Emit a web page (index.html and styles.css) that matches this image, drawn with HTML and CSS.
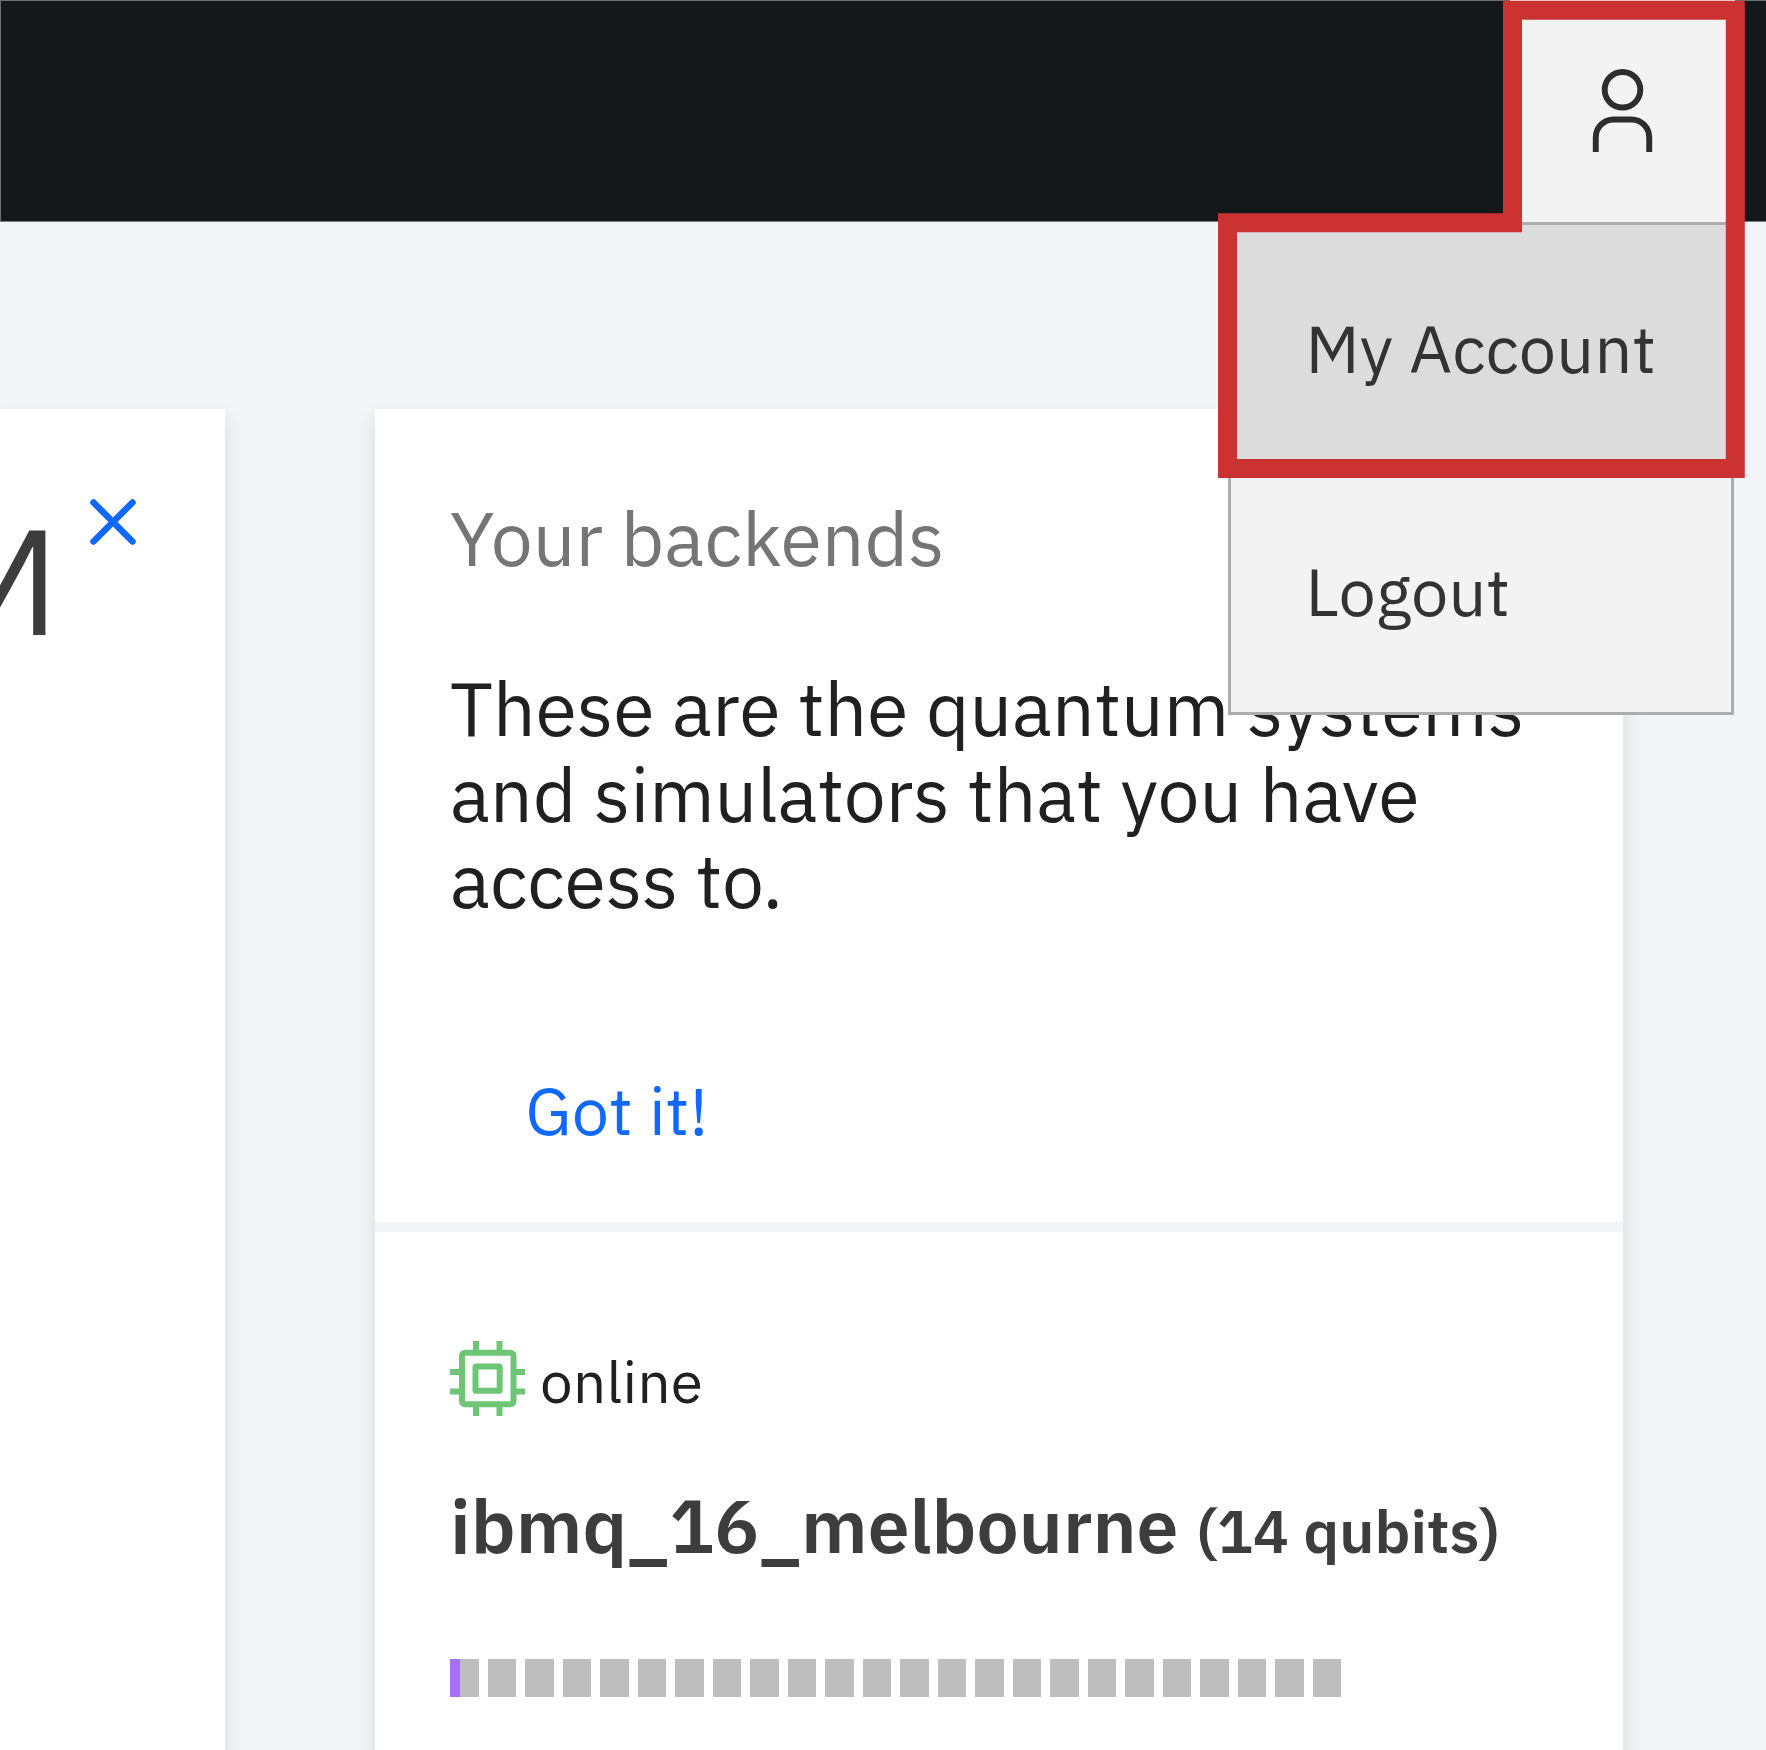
FILE: index.html
```html
<!DOCTYPE html>
<html lang="en">
<head>
<meta charset="utf-8">
<title>My Account</title>
<link rel="stylesheet" href="styles.css">
</head>
<body>
<header class="topbar">
  <button class="user-button" aria-label="User">
    <svg class="user-icon" viewBox="0 0 32 32"><path d="M16 4a5 5 0 1 1-5 5 5 5 0 0 1 5-5m0-2a7 7 0 1 0 7 7A7 7 0 0 0 16 2ZM26 30H24V25a5 5 0 0 0-5-5H13a5 5 0 0 0-5 5v5H6V25a7 7 0 0 1 7-7h6a7 7 0 0 1 7 7Z"/></svg>
  </button>
</header>
<main class="content">
  <section class="card welcome">
    <h1 class="welcome-title">M</h1>
    <svg class="close-icon" viewBox="0 0 46 46"><path d="M3.5 3.5 42.5 42.5M42.5 3.5 3.5 42.5"/></svg>
  </section>
  <section class="card backends">
    <div class="intro">
      <h2 class="heading">Your backends</h2>
      <p class="description">These are the quantum systems and simulators that you have access to.</p>
      <a class="dismiss">Got it!</a>
    </div>
    <div class="backend">
      <div class="status">
        <svg class="chip-icon" viewBox="0 0 75 75">
          <rect x="12" y="11.7" width="51.5" height="51.5" rx="3"/>
          <rect x="25.5" y="25.5" width="24.2" height="24.2" rx="0.5"/>
          <path d="M26 0v11M49.5 0v11M26 64v11M49.5 64v11M0 31h11M0 50.5h11M64 31h11M64 50.5h11"/>
        </svg>
        <span class="status-label">online</span>
      </div>
      <h3 class="name"><span class="name-id">ibmq_16_melbourne</span><span class="name-size">(14 qubits)</span></h3>
      <div class="queue">
        <i class="cell used"></i><i class="cell"></i><i class="cell"></i><i class="cell"></i><i class="cell"></i><i class="cell"></i>
        <i class="cell"></i><i class="cell"></i><i class="cell"></i><i class="cell"></i><i class="cell"></i><i class="cell"></i>
        <i class="cell"></i><i class="cell"></i><i class="cell"></i><i class="cell"></i><i class="cell"></i><i class="cell"></i>
        <i class="cell"></i><i class="cell"></i><i class="cell"></i><i class="cell"></i><i class="cell"></i><i class="cell"></i>
      </div>
    </div>
  </section>
</main>
<nav class="menu">
  <a class="menu-item account">My Account</a>
  <a class="menu-item logout">Logout</a>
</nav>
<svg class="highlight" viewBox="0 0 528 478"><path d="M294.5 10.2H517.3V468.4H9.5V222.7H294.5Z"/></svg>
</body>
</html>
```
FILE: styles.css
```css
* { box-sizing: border-box; }

body {
  position: relative;
  margin: 0;
  width: 1766px;
  height: 1750px;
  overflow: hidden;
  display: flex;
  flex-direction: column;
  background: #f2f4f8;
  font-family: "IBM Plex Sans", Roboto, "Liberation Sans", sans-serif;
  color: #202020;
}

h1, h2, h3, p { margin: 0; font-weight: 400; }

/* Header */
.topbar {
  flex: none;
  height: 222px;
  padding-right: 31px;
  display: flex;
  justify-content: flex-end;
  background: #14181a;
  box-shadow: inset 1px 1px #6b6f71, inset 0 -1px #7c7f81;
}
.user-button {
  width: 225px;
  height: 222px;
  padding: 0 0 2px;
  border: 0;
  display: flex;
  align-items: center;
  justify-content: center;
  background: #f3f3f3;
}
.user-icon { width: 95px; height: 95px; fill: #2d2d2d; }

/* Cards */
.content {
  flex: 1;
  min-height: 0;
  padding-top: 187px;
  display: flex;
  gap: 150px;
}
.card {
  flex: none;
  height: 1400px;
  background: #fff;
  box-shadow: 0 10px 20px rgba(0, 0, 0, .1);
}
.welcome {
  width: 225px;
  padding: 85px 89.5px 0 0;
  display: flex;
  justify-content: flex-end;
  align-items: flex-start;
  gap: 30.2px;
}
.welcome-title {
  font-size: 149px;
  line-height: 170px;
  color: #3d3d3d;
}
.close-icon {
  flex: none;
  margin-top: 5px;
  width: 46px;
  height: 46px;
  fill: none;
  stroke: #0f68ff;
  stroke-width: 6.5;
  stroke-linecap: round;
}

.backends { width: 1247.5px; }
.intro {
  height: 822.7px;
  padding: 86px 75px 0;
  border-bottom: 10px solid #f2f4f8;
}
.heading {
  font-size: 75px;
  line-height: 86px;
  letter-spacing: .05px;
  color: #757575;
}
.description {
  margin-top: 83.5px;
  font-size: 75px;
  line-height: 86px;
}
.dismiss {
  display: block;
  margin: 147.5px 0 0 75.3px;
  font-size: 66.67px;
  line-height: 80px;
  letter-spacing: .2px;
  color: #0f68ff;
}

.backend { padding: 109px 0 0 75px; }
.status { height: 75px; display: flex; align-items: center; gap: 15px; }
.chip-icon { width: 75px; height: 75px; fill: none; stroke: #6fc576; stroke-width: 6; }
.status-label {
  padding-top: 5.2px;
  font-size: 58.33px;
  line-height: 66px;
  letter-spacing: .3px;
}
.name {
  margin-top: 65.6px;
  height: 88px;
  display: flex;
  align-items: baseline;
  gap: 18.5px;
  font-weight: 600;
  line-height: 88px;
  color: #3d3d3d;
  white-space: nowrap;
}
.name-id { font-size: 75px; }
.name-size { font-size: 60px; }
.queue { margin-top: 90px; display: flex; gap: 9px; }
.cell { flex: none; width: 28.5px; height: 38px; background: #bebebe; }
.used { border-left: 10px solid #a970ff; }

/* Account menu */
.menu {
  position: absolute;
  top: 222px;
  left: 1228px;
  width: 506px;
  border: 3px solid #adadad;
  background: #f3f3f3;
  color: #333;
}
.menu-item {
  display: flex;
  align-items: center;
  padding: 0 0 1px 74.5px;
  font-size: 66.67px;
  line-height: 76px;
  letter-spacing: .2px;
}
.account { height: 246px; background: #dcdcdc; }
.logout { height: 241px; }

.highlight {
  position: absolute;
  top: 0;
  left: 1218px;
  width: 528px;
  height: 478px;
  fill: none;
  stroke: #cd3232;
  stroke-width: 19;
}
```
